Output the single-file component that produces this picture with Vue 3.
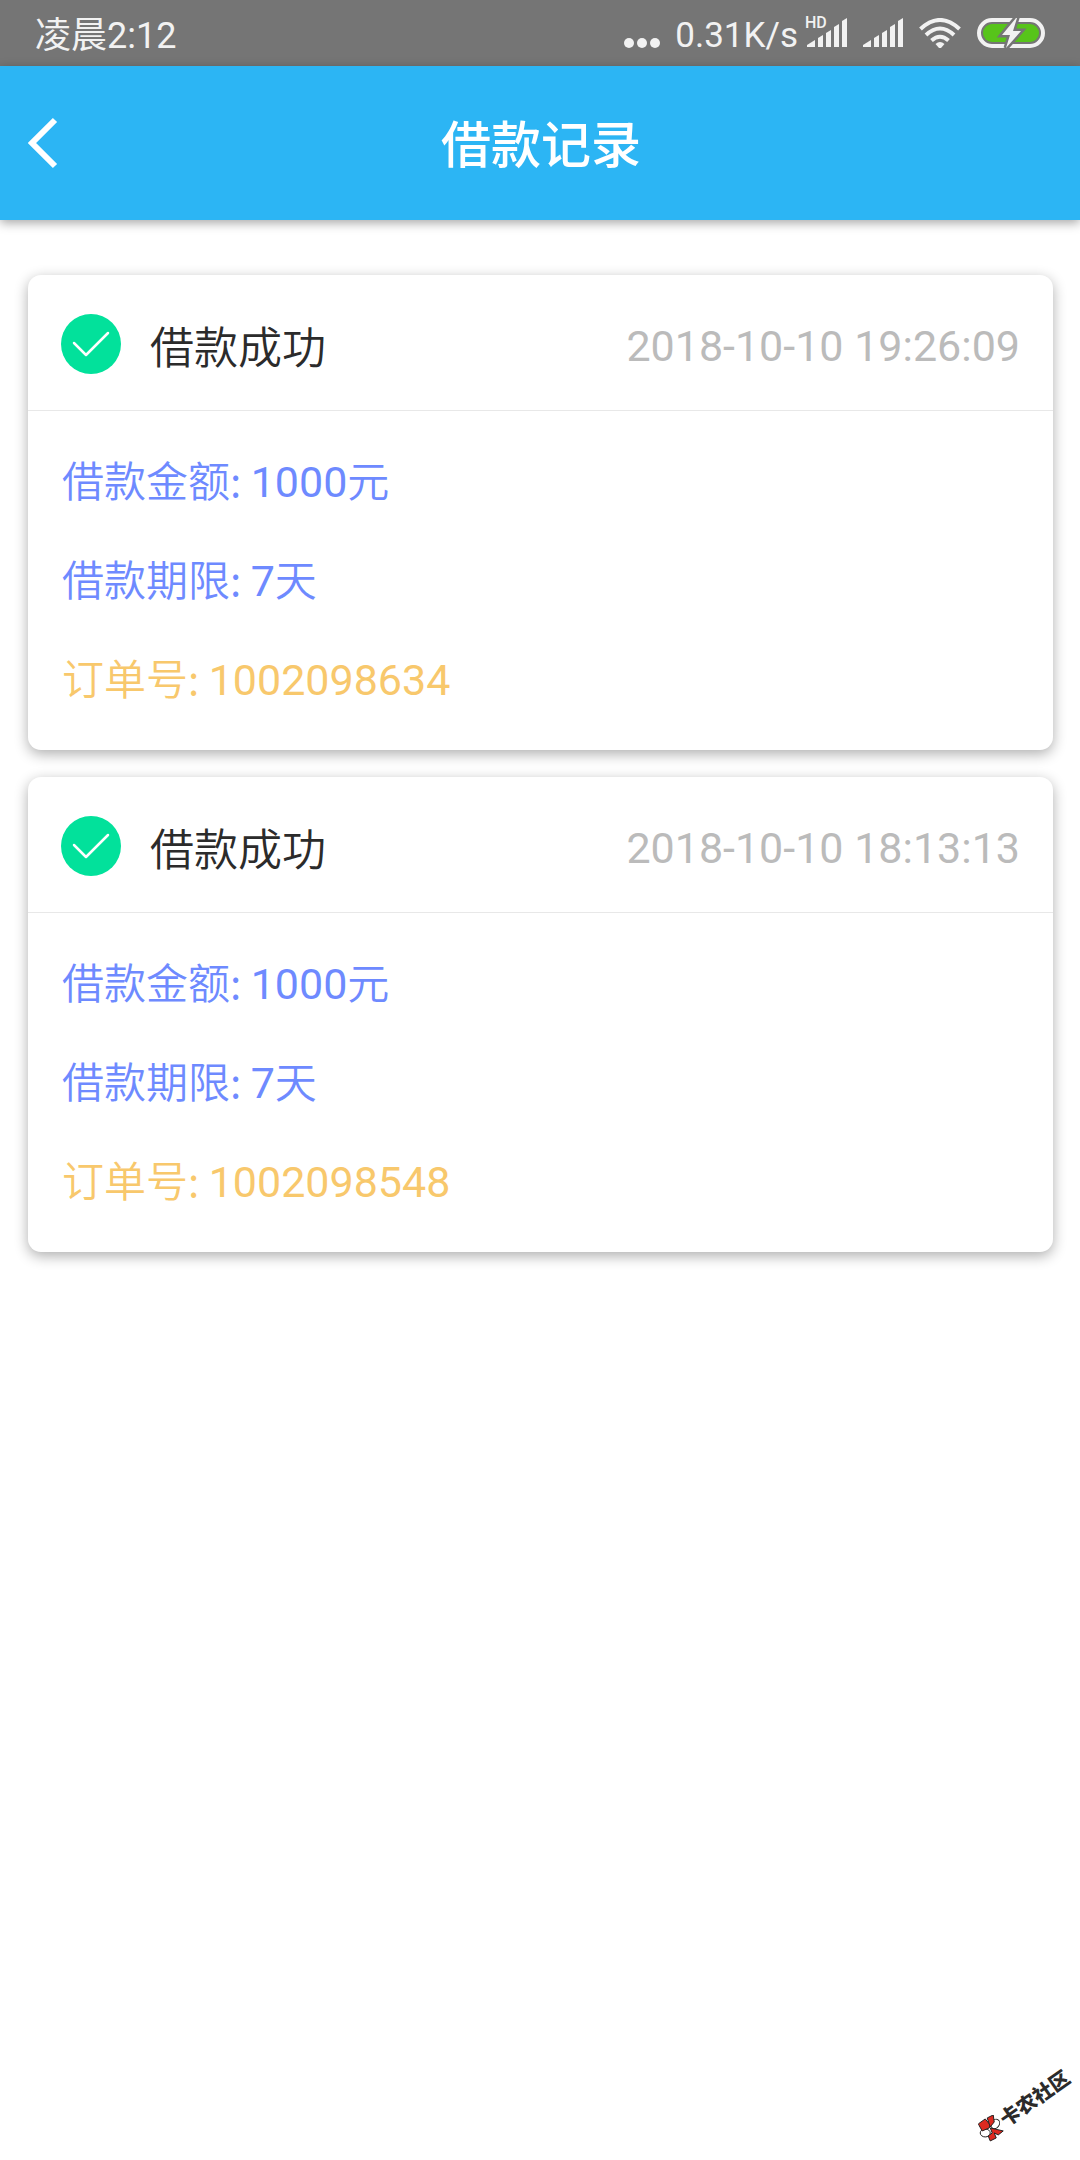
<script setup>
const bars = [
  '0,28 0,26 8,21 8,28',
  '11,28 11,19 16,16 16,28',
  '19,28 19,14 24,11 24,28',
  '27,28 27,8 32,5 32,28',
  '35,28 35,2 40,-1 40,28',
]

const records = [
  { id: '1002098634', status: '借款成功', time: '2018-10-10 19:26:09', amount: '1000', days: '7' },
  { id: '1002098548', status: '借款成功', time: '2018-10-10 18:13:13', amount: '1000', days: '7' },
]
</script>

<template>
  <div class="page">
    <div class="status-bar">
      <span class="clock">凌晨2:12</span>
      <div class="indicators">
        <svg class="dots" width="36" height="30" viewBox="0 0 36 30">
          <circle cx="5" cy="25" r="5" />
          <circle cx="18" cy="25" r="5" />
          <circle cx="31" cy="25" r="5" />
        </svg>
        <span class="speed">0.31K/s</span>
        <div class="signal">
          <span class="hd">HD</span>
          <svg width="42" height="30" viewBox="-1 -1 42 30">
            <polygon v-for="b in bars" :key="b" :points="b" />
          </svg>
        </div>
        <svg class="second" width="42" height="30" viewBox="-1 -1 42 30">
          <polygon v-for="b in bars" :key="b" :points="b" />
        </svg>
        <svg class="wifi" width="42" height="30" viewBox="0 0 42 30">
          <g fill="none" stroke="#f2f2f2" stroke-width="4">
            <path d="M1.500 11Q21 -7 40.500 11" />
            <path d="M7 17Q21 4 35 17" />
            <path d="M12.500 22.500Q21 15 29.500 22.500" />
          </g>
          <path d="M16.500 26Q21 22 25.500 26L22 30H20Z" />
        </svg>
        <svg class="battery" width="68" height="30" viewBox="0 0 68 30">
          <rect x="2" y="2" width="64" height="26" rx="13" fill="none" stroke="#f2f2f2" stroke-width="4" />
          <rect x="6" y="6" width="56" height="18" rx="9" fill="#57c41a" />
          <path d="M39 0L25 17H33L29 30L44 13H36L40 0Z" fill="#f2f2f2" stroke="#757575" stroke-width="5" paint-order="stroke" />
        </svg>
      </div>
    </div>

    <header class="nav">
      <button class="back" type="button" aria-label="返回">
        <svg width="30" height="52" viewBox="0 0 30 52">
          <path d="M27 3L4 26L27 49" fill="none" stroke="#fff" stroke-width="6" />
        </svg>
      </button>
      <h1>借款记录</h1>
    </header>

    <main class="list">
      <article v-for="r in records" :key="r.id" class="card">
        <div class="card-head">
          <svg class="check" width="60" height="60" viewBox="0 0 60 60">
            <circle cx="30" cy="30" r="30" fill="#02e19b" />
            <path d="M13 29L25 41L47 19" fill="none" stroke="#fff" stroke-width="2.500" stroke-linecap="round" stroke-linejoin="round" />
          </svg>
          <h2>{{ r.status }}</h2>
          <time>{{ r.time }}</time>
        </div>
        <div class="card-body">
          <p><span class="label">借款金额: </span>{{ r.amount }}<span class="label">元</span></p>
          <p><span class="label">借款期限: </span>{{ r.days }}<span class="label">天</span></p>
          <p class="order"><span class="label">订单号: </span>{{ r.id }}</p>
        </div>
      </article>
    </main>

    <div class="watermark">
      <svg width="26" height="27" viewBox="0 0 26 27">
        <g stroke="#222" stroke-width="1">
          <ellipse cx="17" cy="9" rx="4" ry="5" fill="#fff" transform="rotate(35 17 9)" />
          <ellipse cx="7" cy="18" rx="5" ry="4" fill="#fff" />
          <path d="M0 9L7 4L12 10L11 13L4 16Z" fill="#dc2a20" />
          <path d="M9 3L15 0L16 7L12 12Z" fill="#dc2a20" />
          <path d="M12 13L25 16L20 20L16 18L18 23L12 26L10 21L14 18Z" fill="#dc2a20" />
        </g>
      </svg>
      <span>卡农社区</span>
    </div>
  </div>
</template>

<style>
body {
  margin: 0;
  background: #fff;
}
</style>

<style scoped>
.page {
  position: relative;
  min-height: 100vh;
  overflow: hidden;
  background: #fff;
  font-family: Roboto, "Noto Sans CJK SC", sans-serif;
}

.status-bar {
  display: flex;
  align-items: center;
  justify-content: space-between;
  height: 66px;
  padding: 0 35px;
  background: #757575;
  color: #f2f2f2;
}

.clock,
.speed {
  font-size: 35px;
  line-height: 60px;
  padding-top: 6px;
}

.clock {
  font-size: 36px;
}

.indicators {
  display: flex;
  align-items: center;
}

.indicators svg {
  display: block;
  fill: #f2f2f2;
}

.speed {
  margin: 0 8px 0 15px;
}

.signal {
  position: relative;
}

.hd {
  position: absolute;
  top: -3px;
  left: -1px;
  font-size: 16px;
  font-weight: 500;
  line-height: 16px;
}

.second {
  margin: 0 15px 0 14px;
}

.battery {
  margin-left: 16px;
}

.nav {
  position: relative;
  display: flex;
  align-items: center;
  justify-content: center;
  height: 154px;
  background: #2cb5f4;
  box-shadow: 0 3px 10px rgba(0, 0, 0, 0.35);
}

.back {
  position: absolute;
  top: 0;
  left: 0;
  height: 154px;
  padding: 0 28px;
  border: 0;
  background: none;
}

.back svg {
  display: block;
}

h1 {
  margin: 0;
  padding: 5px 0 0 2px;
  color: #fff;
  font-size: 50px;
  font-weight: 500;
  line-height: 72px;
}

.list {
  display: flex;
  flex-direction: column;
  gap: 27px;
  padding: 55px 27px 55px 28px;
}

.card {
  border-radius: 13px;
  background: #fff;
  box-shadow: 0 4px 14px rgba(0, 0, 0, 0.32);
}

.card-head {
  display: flex;
  align-items: center;
  height: 133px;
  padding: 2px 33px 0;
  border-bottom: 1px solid #e8e8e8;
}

h2 {
  flex: 1;
  margin: 0 0 0 29px;
  padding-top: 2px;
  color: #2b2b2b;
  font-family: "Noto Sans CJK SC", sans-serif;
  font-size: 44px;
  font-weight: 350;
  line-height: 64px;
}

time {
  padding-top: 4px;
  color: #bbb;
  font-size: 43px;
  line-height: 64px;
}

.card-body {
  padding: 22px 34px 20px;
}

.card-body p {
  margin: 0;
  color: #6e8aff;
  font-size: 43px;
  line-height: 99px;
}

.card-body .order {
  color: #f8c86c;
}

.label {
  font-family: "Noto Sans CJK SC", sans-serif;
  font-size: 42px;
  font-weight: 350;
  line-height: 42px;
}

.watermark {
  position: absolute;
  right: 3px;
  bottom: 41px;
  display: flex;
  align-items: center;
  color: #2b2b2b;
  font-size: 20px;
  font-weight: 900;
  line-height: 26px;
  transform: rotate(-35deg);
}

.watermark svg {
  transform: rotate(35deg);
}
</style>
